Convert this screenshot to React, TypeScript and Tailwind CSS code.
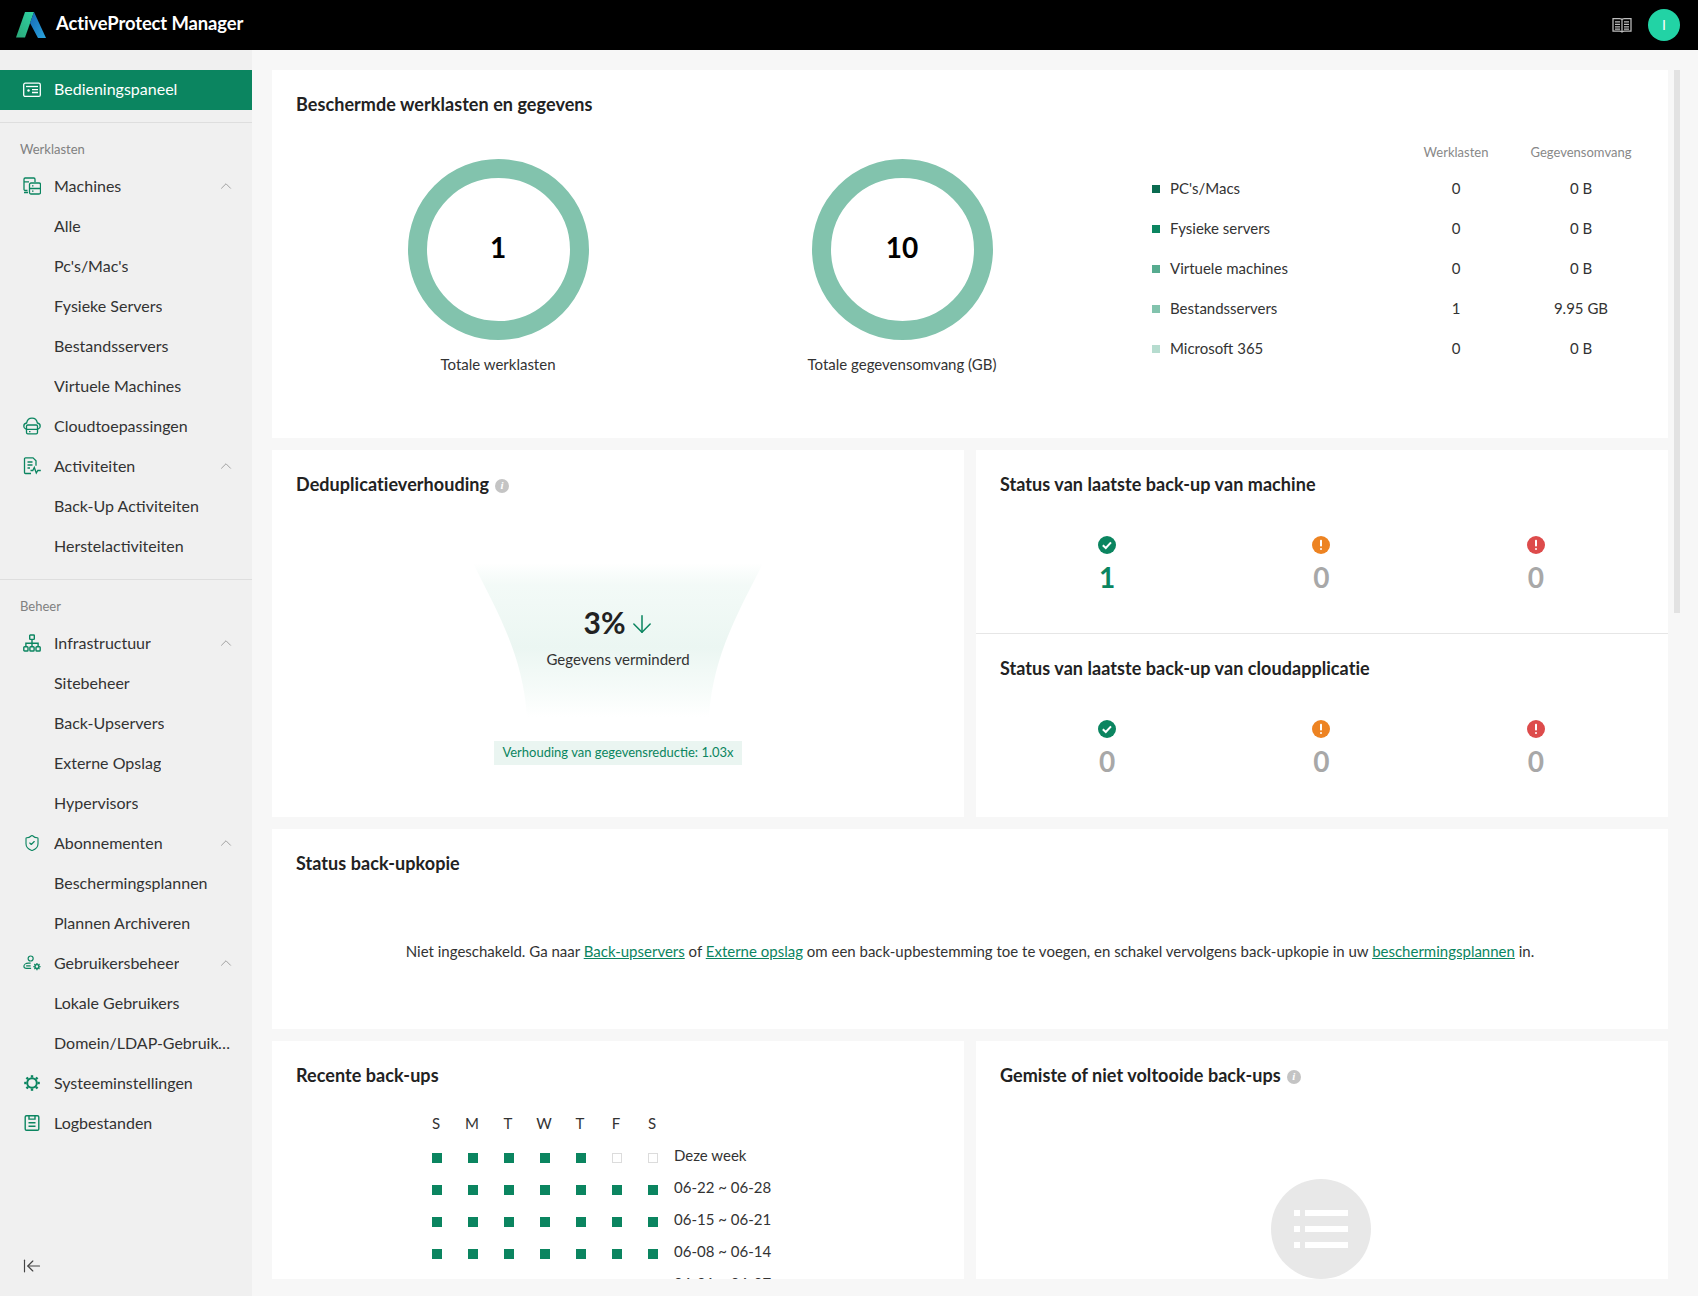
import React from "react";
import { ChevronUp, ArrowLeftToLine, ArrowDown, ShieldCheck } from "lucide-react";

const G = "#0b8560";

function IconDash() {
  return (
    <svg width="18" height="18" viewBox="0 0 18 18" fill="none" stroke="#fff" strokeWidth="1.3">
      <rect x="0.7" y="2.2" width="16.6" height="13.2" rx="1.5" />
      <path d="M3 5.5h12" />
      <circle cx="5.5" cy="9.5" r="1.2" fill="#fff" stroke="none" />
      <path d="M9 8.7h6M9 11.5h6" />
    </svg>
  );
}
function IconMachines() {
  return (
    <svg width="18" height="18" viewBox="0 0 18 18" fill="none" stroke={G} strokeWidth="1.3">
      <path d="M4.5 13.5H2.2A1.2 1.2 0 0 1 1 12.3V2.2A1.2 1.2 0 0 1 2.2 1h8.6A1.2 1.2 0 0 1 12 2.2V5" />
      <path d="M1 4.8h5M1 15.5h4" />
      <rect x="6.5" y="6" width="11" height="11" rx="1.5" />
      <path d="M6.5 11.5h11M9 8.8h1.5M9 14.2h1.5" />
    </svg>
  );
}
function IconCloud() {
  return (
    <svg width="18" height="18" viewBox="0 0 18 18" fill="none" stroke={G} strokeWidth="1.3">
      <path d="M3 12.2C1.5 11.6 0.8 10.4 0.8 9.2 0.8 7.5 2 6.2 3.6 6 4.2 3 6.4 1.2 9 1.2S13.8 3 14.4 6c1.6.2 2.8 1.5 2.8 3.2 0 1.2-.7 2.4-2.2 3" />
      <rect x="3.5" y="8" width="11" height="8.8" rx="1.3" />
      <path d="M3.5 12.3h11M6 14.6h1.5" />
    </svg>
  );
}
function IconActivity() {
  return (
    <svg width="18" height="18" viewBox="0 0 18 18" fill="none" stroke={G} strokeWidth="1.3">
      <path d="M8 16.5H2.5A1 1 0 0 1 1.5 15.5V1.8a1 1 0 0 1 1-1H10l3 3v5" />
      <path d="M4.5 5h5M4.5 8h5M4.5 11h2.5" />
      <path d="M7.5 13.5h2.3l1.5-3 2 5.5 1.5-2.5h3" />
    </svg>
  );
}
function IconNetwork() {
  return (
    <svg width="18" height="18" viewBox="0 0 18 18" fill="none" stroke={G} strokeWidth="1.4">
      <rect x="6.7" y="1" width="4.6" height="4.4" rx="0.6" />
      <rect x="0.8" y="12.8" width="4.2" height="4.2" rx="0.8" />
      <rect x="6.9" y="12.8" width="4.2" height="4.2" rx="0.8" />
      <rect x="13" y="12.8" width="4.2" height="4.2" rx="0.8" />
      <path d="M9 5.4v7.4M2.9 12.8V9.2h12.2v3.6" />
    </svg>
  );
}
function Teeth({ cx, cy, r0, r1, w }: { cx: number; cy: number; r0: number; r1: number; w: number }) {
  const lines = [0, 45, 90, 135, 180, 225, 270, 315].map((a) => {
    const t = (a * Math.PI) / 180;
    return (
      <line
        key={a}
        x1={cx + r0 * Math.cos(t)}
        y1={cy + r0 * Math.sin(t)}
        x2={cx + r1 * Math.cos(t)}
        y2={cy + r1 * Math.sin(t)}
        strokeWidth={w}
      />
    );
  });
  return <>{lines}</>;
}
function IconUsers() {
  return (
    <svg width="20" height="18" viewBox="0 0 20 18" fill="none" stroke={G} strokeWidth="1.3">
      <circle cx="8.5" cy="4" r="2.8" />
      <path d="M8.5 9.2H6C3 9.2 1 10.8 1 12.6 1 14.2 2.4 15 4 15h5M3.5 12.2h5" />
      <circle cx="15.5" cy="13" r="2.2" strokeWidth="1.6" />
      <Teeth cx={15.5} cy={13} r0={2.6} r1={4} w={1.4} />
    </svg>
  );
}
function IconGear() {
  return (
    <svg width="18" height="18" viewBox="0 0 18 18" fill="none" stroke={G}>
      <circle cx="9" cy="9" r="4.8" strokeWidth="2" />
      <Teeth cx={9} cy={9} r0={5.5} r1={7.8} w={2.4} />
    </svg>
  );
}
function IconLog() {
  return (
    <svg width="18" height="18" viewBox="0 0 18 18" fill="none" stroke={G} strokeWidth="1.4">
      <rect x="2.2" y="1.7" width="13.6" height="14.6" rx="1.3" />
      <path d="M6 1.7v3.4h6V1.7M5.5 8.8h7M5.5 12.2h7" />
    </svg>
  );
}
function Book() {
  return (
    <svg width="20" height="19" viewBox="0 0 20 19" fill="none" stroke="#bdbdbd" strokeWidth="1.25">
      <path d="M1 2.5h6.5c1.4 0 2.5.6 2.5 1.6 0-1 1.1-1.6 2.5-1.6H19v12.5h-6.5c-1.4 0-2.5.5-2.5 1.5 0-1-1.1-1.5-2.5-1.5H1z" />
      <path d="M10 4v12M3 5.8h5M3 8.3h5M3 10.8h5M3 13h5M12 5.8h5M12 8.3h5M12 10.8h5M12 13h5" />
    </svg>
  );
}
function Logo() {
  return (
    <svg width="32" height="28" viewBox="0 0 32 28" className="shrink-0">
      <defs>
        <linearGradient id="lg1" x1="0" y1="1" x2="1" y2="0">
          <stop offset="0" stopColor="#2ba878" />
          <stop offset="1" stopColor="#2fd3a4" />
        </linearGradient>
        <linearGradient id="lg2" x1="0" y1="0" x2="1" y2="1">
          <stop offset="0" stopColor="#1668b5" />
          <stop offset="1" stopColor="#2aa4dc" />
        </linearGradient>
      </defs>
      <polygon points="10,1 19,1 10,26.5 1,26.5" fill="url(#lg1)" />
      <polygon points="19,1 31,27 23,27 15,12" fill="url(#lg2)" />
    </svg>
  );
}
function Info() {
  return (
    <span className="inline-flex mt-[3px] w-[14px] h-[14px] rounded-full bg-[#c4c4c4] text-white items-center justify-center text-[11px] leading-none font-bold italic font-['Liberation_Serif',serif]">
      i
    </span>
  );
}
function StatusIcon({ kind }: { kind: "ok" | "warn" | "err" }) {
  const c = kind === "ok" ? "#0b8560" : kind === "warn" ? "#ed8322" : "#dd4b4b";
  return (
    <svg width="18" height="18" viewBox="0 0 18 18">
      <circle cx="9" cy="9" r="9" fill={c} />
      {kind === "ok" ? (
        <path d="M4.8 9.2l3 2.8 5.2-5.6" fill="none" stroke="#fff" strokeWidth="2" />
      ) : (
        <>
          <rect x="8" y="3.8" width="2" height="6.8" rx="0.8" fill="#fff" />
          <rect x="8" y="12" width="2" height="2" rx="1" fill="#fff" />
        </>
      )}
    </svg>
  );
}

function Row({ icon, label, chevron }: { icon?: React.ReactNode; label: string; chevron?: boolean }) {
  return (
    <div className="h-10 flex items-center relative pl-[54px] pr-[20px] text-[16px] text-[#333]">
      {icon && <span className="absolute left-[23px] top-[11px] w-[18px] h-[18px] flex items-center justify-center">{icon}</span>}
      <span className="truncate">{label}</span>
      {chevron && <ChevronUp size={18} strokeWidth={1.2} color="#999" className="ml-auto mr-[-3px] shrink-0" />}
    </div>
  );
}

function Title({ children }: { children: React.ReactNode }) {
  return <h2 className="h-6 pb-[2px] flex items-center gap-[6px] text-[18px] tracking-[0.06px] leading-6 font-bold text-[#222]">{children}</h2>;
}

function Donut({ value, label }: { value: string; label: string }) {
  return (
    <div className="w-[404px] shrink-0 flex flex-col items-center pt-[42px]">
      <div className="w-[181px] h-[181px] rounded-full border-[19px] border-[#82c3ad] flex items-center justify-center">
        <span className="text-[28px] font-bold leading-none text-black -mt-[6px]">{value}</span>
      </div>
      <div className="mt-[14px] h-5 leading-5 text-[15px] text-[#333]">{label}</div>
    </div>
  );
}

const legend = [
  ["#0a6b50", "PC's/Macs", "0", "0 B"],
  ["#0b8560", "Fysieke servers", "0", "0 B"],
  ["#56ab8f", "Virtuele machines", "0", "0 B"],
  ["#82c3ad", "Bestandsservers", "1", "9.95 GB"],
  ["#b6dccf", "Microsoft 365", "0", "0 B"],
];

function StatusBlock({ title, first }: { title: string; first: string }) {
  const firstColor = first === "0" ? "text-[#a8a8a8]" : "text-[#0b8560]";
  return (
    <div className="h-[183px] px-6 pt-[23px]">
      <Title>{title}</Title>
      <div className="mt-[39px] grid grid-cols-3 mr-[1px] text-center">
        {[
          ["ok", first, firstColor],
          ["warn", "0", "text-[#a8a8a8]"],
          ["err", "0", "text-[#a8a8a8]"],
        ].map(([k, v, c], i) => (
          <div key={i} className="flex flex-col items-center">
            <StatusIcon kind={k as "ok" | "warn" | "err"} />
            <span className={`mt-[6px] h-[34px] leading-[34px] text-[28px] font-bold ${c}`}>{v}</span>
          </div>
        ))}
      </div>
    </div>
  );
}

const weeks = ["Deze week", "06-22 ~ 06-28", "06-15 ~ 06-21", "06-08 ~ 06-14", "06-01 ~ 06-07"];
const days = ["S", "M", "T", "W", "T", "F", "S"];

export default function App() {
  return (
    <div className="h-screen w-full flex flex-col overflow-hidden font-['Lato',sans-serif] bg-[#f7f7f7]">
      <header className="h-[50px] bg-black flex items-center shrink-0 pl-[15px] pr-[18px]">
        <Logo />
        <span className="ml-[9px] pb-[2px] text-[18.4px] font-bold text-white tracking-[-0.1px]">ActiveProtect Manager</span>
        <div className="ml-auto flex items-center gap-[16px]">
          <Book />
          <div className="w-8 h-8 rounded-full bg-[#22d3a5] text-white flex items-center justify-center pb-[2px] text-[14px]">I</div>
        </div>
      </header>
      <div className="flex-1 flex min-h-0">
        <aside className="w-[252px] shrink-0 bg-[#f0f0f0] flex flex-col pt-5">
          <div className="h-10 pb-[2px] bg-[#0b8560] relative pl-[54px] flex items-center text-[16px] text-white">
            <span className="absolute left-[23px] top-[11px]"><IconDash /></span>
            Bedieningspaneel
          </div>
          <div className="mt-3 border-b border-[#dedede]" />
          <div className="pl-5 pt-4 pb-[7px] h-[43px] text-[13px] leading-5 text-[#808080]">Werklasten</div>
          <Row icon={<IconMachines />} label="Machines" chevron />
          <Row label="Alle" />
          <Row label="Pc's/Mac's" />
          <Row label="Fysieke Servers" />
          <Row label="Bestandsservers" />
          <Row label="Virtuele Machines" />
          <Row icon={<IconCloud />} label="Cloudtoepassingen" />
          <Row icon={<IconActivity />} label="Activiteiten" chevron />
          <Row label="Back-Up Activiteiten" />
          <Row label="Herstelactiviteiten" />
          <div className="mt-[13px] border-b border-[#dedede]" />
          <div className="pl-5 pt-4 h-[43px] text-[13px] leading-5 text-[#808080]">Beheer</div>
          <Row icon={<IconNetwork />} label="Infrastructuur" chevron />
          <Row label="Sitebeheer" />
          <Row label="Back-Upservers" />
          <Row label="Externe Opslag" />
          <Row label="Hypervisors" />
          <Row icon={<ShieldCheck size={18} strokeWidth={1.5} color={G} />} label="Abonnementen" chevron />
          <Row label="Beschermingsplannen" />
          <Row label="Plannen Archiveren" />
          <Row icon={<IconUsers />} label="Gebruikersbeheer" chevron />
          <Row label="Lokale Gebruikers" />
          <Row label="Domein/LDAP-Gebruikers" />
          <Row icon={<IconGear />} label="Systeeminstellingen" />
          <Row icon={<IconLog />} label="Logbestanden" />
          <div className="mt-auto mb-5 h-5 pl-[22px] flex items-center">
            <ArrowLeftToLine size={20} strokeWidth={1.4} color="#444" />
          </div>
        </aside>
        <main className="flex-1 relative overflow-hidden pt-5 pl-5 pr-[30px] flex flex-col gap-3">
          <section className="h-[368px] shrink-0 bg-white pt-[23px] pl-6">
            <Title>Beschermde werklasten en gegevens</Title>
            <div className="flex">
              <Donut value="1" label="Totale werklasten" />
              <Donut value="10" label="Totale gegevensomvang (GB)" />
              <div className="ml-12 pt-[26px] w-[504px] shrink-0 text-[15px] text-[#333]">
                <div className="grid grid-cols-[254px_100px_150px] h-5 items-center text-[13px] text-[#888] text-center">
                  <span />
                  <span>Werklasten</span>
                  <span>Gegevensomvang</span>
                </div>
                <div className="mt-[5px]">
                  {legend.map(([c, n, w, g]) => (
                    <div key={n} className="grid grid-cols-[254px_100px_150px] h-10 items-center text-center">
                      <span className="flex items-center text-left">
                        <span className="w-2 h-2 mr-[10px] mt-[2px]" style={{ backgroundColor: c }} />
                        {n}
                      </span>
                      <span>{w}</span>
                      <span>{g}</span>
                    </div>
                  ))}
                </div>
              </div>
            </div>
          </section>

          <div className="grid grid-cols-2 gap-3 h-[367px] shrink-0">
            <section className="bg-white pt-[23px] px-6 flex flex-col items-center">
              <div className="self-stretch"><Title>Deduplicatieverhouding <Info /></Title></div>
              <div className="relative mt-[66px] w-[290px] h-[154px] flex flex-col items-center">
                <svg className="absolute inset-0" width="290" height="154" viewBox="0 0 290 154">
                  <defs>
                    <linearGradient id="fn" x1="0" y1="0" x2="0" y2="1">
                      <stop offset="0" stopColor="#eef8f4" stopOpacity="0" />
                      <stop offset="0.14" stopColor="#eef8f4" stopOpacity="0.7" />
                      <stop offset="0.55" stopColor="#ebf6f2" />
                      <stop offset="0.8" stopColor="#eef8f4" stopOpacity="0.6" />
                      <stop offset="1" stopColor="#eef8f4" stopOpacity="0" />
                    </linearGradient>
                  </defs>
                  <path d="M0 0H290C268 45 240 90 236 154H54C50 90 22 45 0 0Z" fill="url(#fn)" />
                </svg>
                <div className="relative mt-[41px] h-9 flex items-center gap-[2px] ml-[3px]">
                  <span className="text-[30px] font-bold leading-9 text-[#222]">3%</span>
                  <ArrowDown size={28} strokeWidth={1.3} color={G} className="mt-1" />
                </div>
                <div className="relative mt-[9px] h-5 leading-5 text-[15px] text-[#333]">Gegevens verminderd</div>
              </div>
              <div className="mt-6 h-6 px-2 flex items-center bg-[#eaf5f1] text-[13px] text-[#0b8560]">Verhouding van gegevensreductie: 1.03x</div>
            </section>
            <section className="bg-white flex flex-col">
              <StatusBlock title="Status van laatste back-up van machine" first="1" />
              <div className="border-b border-[#e6e6e6]" />
              <StatusBlock title="Status van laatste back-up van cloudapplicatie" first="0" />
            </section>
          </div>

          <section className="h-[200px] shrink-0 bg-white pt-[23px] px-6">
            <Title>Status back-upkopie</Title>
            <p className="mt-[63px] h-6 leading-6 text-center text-[15px] text-[#333]">
              Niet ingeschakeld. Ga naar <a className="text-[#0b8560] underline">Back-upservers</a> of <a className="text-[#0b8560] underline">Externe opslag</a> om een back-upbestemming toe te voegen, en schakel vervolgens back-upkopie in uw <a className="text-[#0b8560] underline">beschermingsplannen</a> in.
            </p>
          </section>

          <div className="grid grid-cols-2 gap-3 h-[238px] shrink-0">
            <section className="bg-white pt-[23px] px-6 overflow-hidden">
              <Title>Recente back-ups</Title>
              <div className="mt-6 ml-[123px] grid grid-cols-[repeat(7,36px)] h-5 items-center text-center text-[15px] text-[#333]">
                {days.map((d, i) => <span key={i} className="-ml-[2px]">{d}</span>)}
              </div>
              <div className="mt-[10px] ml-[123px]">
                {weeks.map((w, r) => (
                  <div key={w} className="flex h-8 items-center">
                    <div className="grid grid-cols-[repeat(7,36px)] justify-items-center">
                      {days.map((_, i) =>
                        r === 0 && i >= 5 ? (
                          <span key={i} className="w-[10px] h-[10px] border border-[#dcdcdc]" />
                        ) : (
                          <span key={i} className="w-[10px] h-[10px] bg-[#0b8560]" />
                        )
                      )}
                    </div>
                    <span className="ml-[3px] -mt-[6px] text-[15px] text-[#333]">{w}</span>
                  </div>
                ))}
              </div>
            </section>
            <section className="bg-white pt-[23px] px-6 overflow-hidden flex flex-col items-center">
              <div className="self-stretch"><Title>Gemiste of niet voltooide back-ups <Info /></Title></div>
              <div className="mt-[91px] w-[100px] h-[100px] shrink-0 -translate-x-px rounded-full bg-[#e8e8e8] flex items-center justify-center">
                <svg width="54" height="38" viewBox="0 0 54 38" fill="#fff">
                  <rect x="0" y="0" width="6" height="6" />
                  <rect x="11" y="0" width="43" height="6" />
                  <rect x="0" y="16" width="6" height="6" />
                  <rect x="11" y="16" width="43" height="6" />
                  <rect x="0" y="32" width="6" height="6" />
                  <rect x="11" y="32" width="43" height="6" />
                </svg>
              </div>
            </section>
          </div>
          <div className="absolute right-[18px] top-5 w-[6px] h-[543px] bg-[#e2e2e2]" />
        </main>
      </div>
    </div>
  );
}
